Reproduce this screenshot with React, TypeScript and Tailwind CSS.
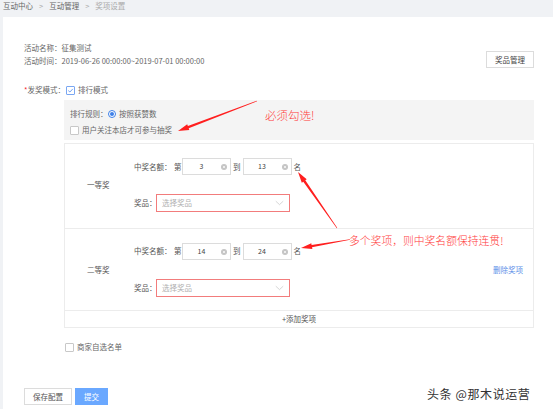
import React from 'react';

type Pt = [number, number];

// tapered red annotation arrow, from a thin tail to a pointed head
function arrowPoints(s: Pt, t: Pt, w0: number, w1: number, hl: number, hw: number) {
    const dx = t[0] - s[0];
    const dy = t[1] - s[1];
    const len = Math.hypot(dx, dy);
    const ux = dx / len;
    const uy = dy / len;
    const nx = -uy;
    const ny = ux;
    const bx = t[0] - ux * hl;
    const by = t[1] - uy * hl;
    const pts: Pt[] = [
        [s[0] + nx * w0 / 2, s[1] + ny * w0 / 2],
        [bx + nx * w1 / 2, by + ny * w1 / 2],
        [bx + nx * hw / 2, by + ny * hw / 2],
        t,
        [bx - nx * hw / 2, by - ny * hw / 2],
        [bx - nx * w1 / 2, by - ny * w1 / 2],
        [s[0] - nx * w0 / 2, s[1] - ny * w0 / 2],
    ];
    return pts.map(p => `${p[0].toFixed(1)},${p[1].toFixed(1)}`).join(' ');
}

function Checkbox({ checked = false }: { checked?: boolean }) {
    return (
        <span
            className={`inline-flex w-[9px] h-[9px] shrink-0 items-center justify-center rounded-[1px] border bg-white ${
                checked ? 'border-[#7aa7f2]' : 'border-[#c8c8c8]'
            }`}
        >
            {checked && (
                <svg width="7" height="7" viewBox="0 0 7 7">
                    <path d="M1.3 3.6 L2.9 5 L5.8 1.9" fill="none" stroke="#4a86ec" strokeWidth="0.8" />
                </svg>
            )}
        </span>
    );
}

function NumInput({ value }: { value: string }) {
    return (
        <div className="relative flex h-[17px] w-[49px] shrink-0 items-center border border-[#dcdcdc] bg-white">
            <span className="flex-1 pr-[10px] text-center text-[7px] text-[#444]">{value}</span>
            <svg className="absolute right-[3px] top-[5px]" width="6" height="6" viewBox="0 0 6 6">
                <circle cx="3" cy="3" r="3" fill="#c4c4c4" />
                <path d="M1.9 1.9 L4.1 4.1 M4.1 1.9 L1.9 4.1" stroke="#fff" strokeWidth="0.7" />
            </svg>
        </div>
    );
}

function PrizeRow({ name, from, to, last = false }: { name: string; from: string; to: string; last?: boolean }) {
    return (
        <div className={`relative flex items-center border-b border-[#ececec] ${last ? 'h-[82px]' : 'h-[85px] pb-[2px]'}`}>
            <div className="w-[69px] shrink-0 pl-[22px] text-[7.5px] text-[#555]">{name}</div>
            <div className="flex flex-col gap-[19px]">
                <div className="flex items-center text-[7.5px] text-[#555]">
                    <span className="w-[40px] shrink-0">中奖名额：</span>
                    <span className="w-[8px] shrink-0">第</span>
                    <NumInput value={from} />
                    <span className="mx-[2px]">到</span>
                    <NumInput value={to} />
                    <span className="ml-[2px]">名</span>
                </div>
                <div className="flex items-center text-[7.5px] text-[#555]">
                    <span className="w-[22px] shrink-0">奖品：</span>
                    <div className="flex h-[18px] w-[134px] shrink-0 items-center justify-between border border-[#f27c7c] bg-white px-[5px]">
                        <span className="text-[#b0b0b0]">选择奖品</span>
                        <svg width="9" height="6" viewBox="0 0 9 6">
                            <path d="M0.8 1.2 L4.5 4.6 L8.2 1.2" fill="none" stroke="#c4c4c4" strokeWidth="0.7" />
                        </svg>
                    </div>
                </div>
            </div>
            {last && (
                <span className="absolute right-[10px] top-[35px] text-[7.5px] text-[#5c8fe8]">删除奖项</span>
            )}
        </div>
    );
}

export default function App() {
    return (
        <div className="relative h-[409px] w-[553px] overflow-hidden whitespace-nowrap bg-[#f0f2f5] pl-[3px] font-['Noto_Sans_CJK_SC','Liberation_Sans',sans-serif]">
            {/* breadcrumb */}
            <div className="flex h-[17px] items-start gap-[6px] pt-[1px] text-[7.5px] leading-[9px] text-[#666]">
                <span>互动中心</span>
                <span className="text-[#aaa]">&gt;</span>
                <span>互动管理</span>
                <span className="text-[#aaa]">&gt;</span>
                <span className="text-[#aaa]">奖项设置</span>
            </div>

            {/* main card */}
            <div className="h-[392px] bg-white pl-[21px] pr-[19px] pt-[24px]">
                <div className="flex items-end justify-between">
                    <div className="text-[7.5px] leading-[13px] text-[#666]">
                        <div>活动名称：征集测试</div>
                        <div>活动时间：2019-06-26 00:00:00~2019-07-01 00:00:00</div>
                    </div>
                    <button className="mb-[-1px] h-[17px] w-[48px] border border-[#dcdcdc] bg-white text-[7.5px] text-[#444]">
                        奖品管理
                    </button>
                </div>

                <div className="mt-[17px] flex h-[12px] items-center text-[7.5px] text-[#666]">
                    <span className="mr-[1px]">
                        <span className="text-[#f5222d]">*</span>发奖模式：
                    </span>
                    <Checkbox checked />
                    <span className="ml-[3px]">排行模式</span>
                </div>

                {/* ranking rules */}
                <div className="ml-[40px] mt-[4px] flex h-[40px] flex-col gap-[4px] bg-[#f4f4f4] pl-[6px] pt-[8px] text-[7.5px] text-[#666]">
                    <div className="flex h-[12px] items-center">
                        <span className="w-[38px] shrink-0">排行规则：</span>
                        <span className="flex h-[8px] w-[8px] shrink-0 items-center justify-center rounded-full border border-[#3d7fe8] bg-white">
                            <span className="h-[4px] w-[4px] rounded-full bg-[#3d7fe8]" />
                        </span>
                        <span className="ml-[3px]">按照获赞数</span>
                    </div>
                    <div className="flex h-[12px] items-center">
                        <Checkbox />
                        <span className="ml-[3px]">用户关注本店才可参与抽奖</span>
                    </div>
                </div>

                {/* prize list */}
                <div className="ml-[40px] mt-[3px] border border-[#ececec]">
                    <PrizeRow name="一等奖" from="3" to="13" />
                    <PrizeRow name="二等奖" from="14" to="24" last />
                    <div className="flex h-[16px] items-center justify-center text-[7.5px] text-[#555]">+添加奖项</div>
                </div>

                <div className="ml-[41px] mt-[13px] flex h-[12px] items-center text-[7.5px] text-[#666]">
                    <Checkbox />
                    <span className="ml-[3px]">商家自选名单</span>
                </div>

                <div className="mt-[35px] flex gap-[3px]">
                    <button className="h-[17px] w-[48px] border border-[#dcdcdc] bg-white text-[7.5px] text-[#555]">保存配置</button>
                    <button className="h-[17px] w-[33px] bg-[#6aa8ff] text-[7.5px] text-white">提交</button>
                </div>
            </div>

            {/* annotations laid over the page */}
            <svg className="pointer-events-none absolute left-0 top-0" width="553" height="409">
                <polygon points={arrowPoints([257, 101], [178, 131], 0.6, 2.4, 11, 6)} fill="#ff1f1f" />
                <polygon points={arrowPoints([337, 228], [298, 172], 0.6, 2.4, 11, 6)} fill="#ff1f1f" />
                <polygon points={arrowPoints([350, 239.5], [301, 248], 0.6, 2.4, 11, 6)} fill="#ff1f1f" />
            </svg>
            <div className="absolute left-[265px] top-[107px] text-[11.5px] font-light leading-[16px] text-[#ff3b3b]">必须勾选!</div>
            <div className="absolute left-[349px] top-[232px] text-[10.8px] font-light leading-[16px] text-[#ff3b3b]">多个奖项，则中奖名额保持连贯!</div>
            <div className="absolute left-[427px] top-[385px] text-[12px] leading-[17px] tracking-[0.6px] text-[#333]">头条 @那木说运营</div>
        </div>
    );
}
